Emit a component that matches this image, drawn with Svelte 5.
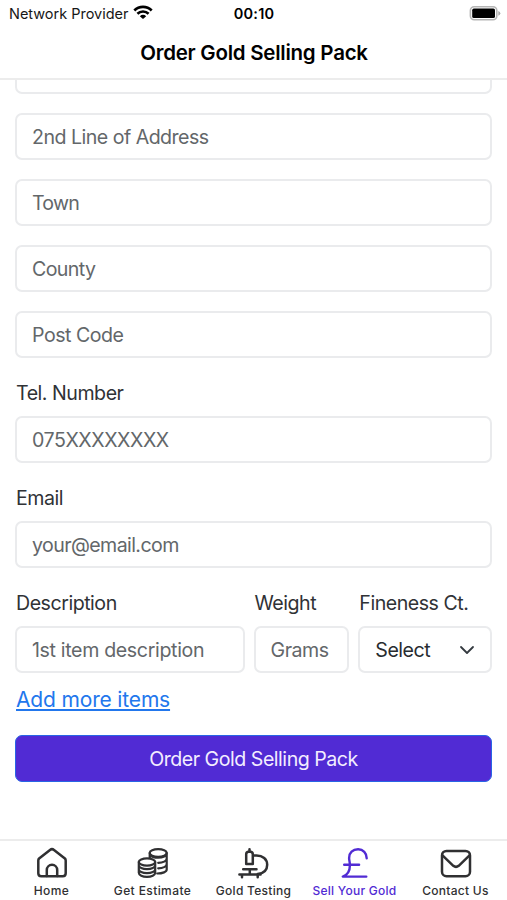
<script>
  const addressFields = [
    { text: '2nd Line of Address', tracking: -0.52 },
    { text: 'Town', tracking: -0.8 },
    { text: 'County', tracking: -0.6 },
    { text: 'Post Code', tracking: -0.5 }
  ];
  const tabs = [
    { text: 'Home', tracking: 0.4 },
    { text: 'Get Estimate', tracking: 0.4 },
    { text: 'Gold Testing', tracking: 0.27 },
    { text: 'Sell Your Gold', tracking: 0.27 },
    { text: 'Contact Us', tracking: 0.27 }
  ];
</script>

<div class="screen">
  <header>
    <div class="status">
      <div class="network">
        <span class="carrier">Network Provider</span>
        <svg class="wifi" width="20" height="15" viewBox="0 0 20 15" fill="none" stroke="#000" stroke-width="2.6">
          <path d="M1.3 5.5a12.3 12.3 0 0 1 17.4 0M4.4 8.8a8 8 0 0 1 11.2 0" />
          <path d="M10 14 6.8 11.2a4.8 4.8 0 0 1 6.4 0Z" fill="#000" stroke="none" />
        </svg>
      </div>
      <span class="time">00:10</span>
      <svg class="battery" width="32" height="15" viewBox="0 0 32 15">
        <rect x="1.4" y=".8" width="26.4" height="13" rx="3.8" fill="#fff" stroke="#b5b5b5" stroke-width="1.6" />
        <rect x="3.2" y="2.6" width="22.8" height="9.5" rx="1.6" />
        <path d="M29.3 5v4.7q2-.7 2-2.35T29.3 5" fill="#aaa" />
      </svg>
    </div>
    <h1>Order Gold Selling Pack</h1>
  </header>

  <main>
    <div class="field first"></div>
    {#each addressFields as field}
      <div class="field stacked"><span style:letter-spacing="{field.tracking}px">{field.text}</span></div>
    {/each}
    <div class="label">Tel. Number</div>
    <div class="field tel"><span>075XXXXXXXX</span></div>
    <div class="label">Email</div>
    <div class="field email"><span>your@email.com</span></div>
    <div class="row">
      <div class="description">
        <div class="label">Description</div>
        <div class="field"><span>1st item description</span></div>
      </div>
      <div class="weight">
        <div class="label">Weight</div>
        <div class="field"><span>Grams</span></div>
      </div>
      <div class="fineness">
        <div class="label">Fineness Ct.</div>
        <div class="field select">
          <span>Select</span>
          <svg width="16" height="10" viewBox="0 0 16 10" fill="none" stroke="#343a40" stroke-width="1.8" stroke-linecap="round" stroke-linejoin="round"><path d="m2 2 6 6 6-6" /></svg>
        </div>
      </div>
    </div>
    <div class="more"><a href="#items">Add more items</a></div>
    <button>Order Gold Selling Pack</button>
  </main>

  <nav>
    {#each tabs as tab, i}
      <div class="tab" class:active={i === 3}>
        <svg width="34" height="34" viewBox="0 0 34 34" fill="none" stroke="currentColor" stroke-width="2.5" stroke-linecap="round" stroke-linejoin="round">
          {#if i === 0}
            <path d="M3.3 14.5q0-1.2.8-2L15 3.9q2-1.6 4 0l10.9 8.6q.8.8.8 2v12.7q0 3-3 3H6.3q-3 0-3-3Z" />
            <path d="M11.8 30v-6a5.2 5.2 0 0 1 10.4 0v6" />
          {:else if i === 1}
            <g stroke-width="2.2">
              <ellipse cx="22.2" cy="7" rx="8.5" ry="3.8" />
              <path d="M13.7 7v5M30.7 7v16.5c0 2.3-4 4-9.5 4M30.7 12.5c0 2.6-3.8 4.3-8.5 4.3M30.7 18c0 2.6-3.8 4.3-8.5 4.3M14 9c1.3 1.7 4.5 2.7 8.2 2.7 4.7 0 8.5-1.8 8.5-4" />
              <ellipse cx="11" cy="16" rx="8.2" ry="3.7" />
              <path d="M2.8 16v10.8c0 2.3 3.7 4 8.2 4s8.2-1.7 8.2-4V16M2.8 19.2c0 2.3 3.7 3.9 8.2 3.9s8.2-1.6 8.2-3.9M2.8 23.2c0 2.3 3.7 3.9 8.2 3.9s8.2-1.6 8.2-3.9" />
            </g>
          {:else if i === 2}
            <path d="M9.2 8.2q0-2 2-2.5h2.6q2 .5 2 2.5v9.7H9.2ZM12.5 5.5V3.2M16.2 9.5h3.3c6.2 0 10.7 3.5 10.7 9.2 0 5.2-3.8 8.6-9.5 9.4M6.2 23.3h13.3M12.8 24v4M2.4 28.6h21.2M5 29v2.2M20.7 29v2.2" />
          {:else if i === 3}
            <path d="M28.7 12.2c0-5.2-3.6-8.9-8.6-8.9-5.4 0-9 3.5-9 8.6 0 2.5.8 4.1.8 7.3 0 5.8-2.6 9.8-7.1 11.4h23.5M6.2 18.7h14.9" stroke-width="2.4" />
          {:else}
            <rect x="3" y="4.9" width="28" height="25.4" rx="4.5" />
            <path d="m3.5 9.4 10.8 10.4q2.7 2.2 5.4 0L30.5 9.4" />
          {/if}
        </svg>
        <span style:letter-spacing="{tab.tracking}px">{tab.text}</span>
      </div>
    {/each}
  </nav>
</div>

<style>
  :global(body) { margin: 0; background: #fff; }
  .screen {
    width: 507px; height: 900px; overflow: hidden; display: flex; flex-direction: column;
    background: #fff; color: #303236; font: 19.6px/28px Inter, "Liberation Sans", sans-serif;
    letter-spacing: -.48px;
  }
  * { box-sizing: border-box; }
  svg { display: block; }
  header { height: 80px; flex: none; border-bottom: 2px solid #ececec; color: #000; position: relative; z-index: 1; background: #fff; }
  .status { display: grid; grid-template-columns: 1fr auto 1fr; height: 28px; padding: 0 6px 0 9px; align-items: center; font-size: 14.5px; letter-spacing: -.02px; }
  .network { display: flex; align-items: center; }
  .carrier { color: #171717; }
  .wifi { margin-left: 5px; margin-top: -3px; }
  .time { font-weight: 600; letter-spacing: .25px; margin-right: 2px; }
  .battery { justify-self: end; margin-top: -2px; }
  h1 { margin: 11px 0 0 1px; text-align: center; font-size: 20.5px; line-height: 28px; font-weight: 600; letter-spacing: -.25px; }
  main { flex: 1; padding: 0 15px; min-height: 0; overflow: hidden; }
  .field { height: 47px; border: 2px solid #eaebed; border-radius: 7px; padding: 1px 15px 0; display: flex; align-items: center; color: #63676a; white-space: nowrap; background: #fff; }
  .field.first { margin-top: -33px; }
  .stacked { margin-top: 19px; }
  .tel { letter-spacing: -.45px; }
  .email { letter-spacing: -.6px; }
  .label { height: 58px; padding: 21px 0 0 1px; white-space: nowrap; }
  .row { display: flex; gap: 9px; }
  .description { width: 230px; }
  .description .field { letter-spacing: -.35px; }
  .weight { width: 96px; }
  .fineness { width: 134px; }
  .select { color: #282c30; justify-content: space-between; }
  .more { height: 62px; padding: 13px 0 0 1px; }
  a { color: #2277ed; font-size: 21px; letter-spacing: -.16px; text-decoration-thickness: 1.5px; text-underline-offset: 2px; text-decoration-skip-ink: none; }
  button { display: block; width: 100%; height: 47px; padding: 0; background: #512bd4; color: #f3edff; border: 1px solid #2865e5; border-radius: 7px; font: inherit; letter-spacing: -.48px; }
  nav { height: 61px; flex: none; border-top: 2px solid #ececec; display: grid; grid-template-columns: repeat(5, 101px); padding-left: 1px; }
  .tab { display: flex; flex-direction: column; align-items: center; padding-top: 5px; color: #303032; }
  .tab span { font-size: 12px; line-height: 16px; font-weight: 500; white-space: nowrap; margin-top: 3px; }
  .active { color: #512bd4; }
</style>
